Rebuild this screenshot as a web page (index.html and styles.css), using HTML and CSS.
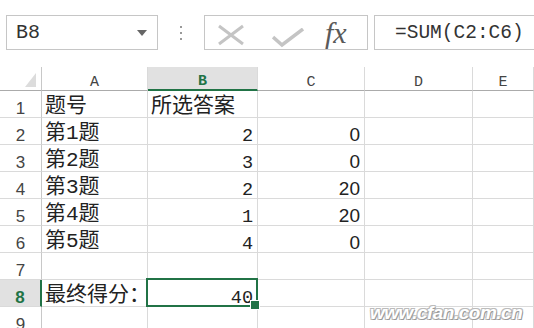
FILE: index.html
```html
<!DOCTYPE html>
<html lang="zh-CN">
<head>
  <meta charset="UTF-8" />
  <title>最终得分</title>
  <link rel="stylesheet" href="styles.css">
</head>
<body>

  <div class="toolbar">
    <div class="namebox">
      <span>B8</span>
      <svg class="arrow" width="10" height="6" viewBox="0 0 10 6"><polygon points="0,0 10,0 5,6" fill="#666"/></svg>
    </div>
    <div class="grip"><i></i><i></i><i></i></div>
    <div class="fxbox">
      <svg class="cancel" width="28" height="22" viewBox="0 0 28 22">
        <path d="M2 2 L26 20 M26 2 L2 20" stroke="#c4c4c4" stroke-width="3" fill="none"/>
      </svg>
      <svg class="enter" width="32" height="20" viewBox="0 0 32 20">
        <path d="M1 9 L10 17 L31 1" stroke="#c4c4c4" stroke-width="3.5" fill="none"/>
      </svg>
      <span class="fx">fx</span>
    </div>
    <div class="formula">=SUM(C2:C6)</div>
  </div>

  <div class="sheet">
    <div class="corner"><span class="tri"></span></div>
    <div class="colhead">A</div>
    <div class="colhead active">B</div>
    <div class="colhead">C</div>
    <div class="colhead">D</div>
    <div class="colhead">E</div>

    <div class="rowhead">1</div>
    <div class="cell">题号</div>
    <div class="cell">所选答案</div>
    <div class="cell"></div>
    <div class="cell"></div>
    <div class="cell"></div>

    <div class="rowhead">2</div>
    <div class="cell">第1题</div>
    <div class="cell num">2</div>
    <div class="cell score">0</div>
    <div class="cell"></div>
    <div class="cell"></div>

    <div class="rowhead">3</div>
    <div class="cell">第2题</div>
    <div class="cell num">3</div>
    <div class="cell score">0</div>
    <div class="cell"></div>
    <div class="cell"></div>

    <div class="rowhead">4</div>
    <div class="cell">第3题</div>
    <div class="cell num">2</div>
    <div class="cell score">20</div>
    <div class="cell"></div>
    <div class="cell"></div>

    <div class="rowhead">5</div>
    <div class="cell">第4题</div>
    <div class="cell num">1</div>
    <div class="cell score">20</div>
    <div class="cell"></div>
    <div class="cell"></div>

    <div class="rowhead">6</div>
    <div class="cell">第5题</div>
    <div class="cell num">4</div>
    <div class="cell score">0</div>
    <div class="cell"></div>
    <div class="cell"></div>

    <div class="rowhead">7</div>
    <div class="cell"></div>
    <div class="cell"></div>
    <div class="cell"></div>
    <div class="cell"></div>
    <div class="cell"></div>

    <div class="rowhead active">8</div>
    <div class="cell">最终得分：</div>
    <div class="cell num sel">40</div>
    <div class="cell"></div>
    <div class="cell"></div>
    <div class="cell"></div>

    <div class="rowhead">9</div>
    <div class="cell"></div>
    <div class="cell"></div>
    <div class="cell"></div>
    <div class="cell"></div>
    <div class="cell"></div>
  </div>

  <div class="watermark">www.cfan.com.cn</div>

</body>
</html>
```

FILE: styles.css
```css
* {
  margin: 0;
  padding: 0;
  box-sizing: border-box;
}

body {
  width: 534px;
  height: 328px;
  overflow: hidden;
  background: #fff;
  position: relative;
  color: #222;
}

/* formula bar */
.toolbar {
  display: flex;
  height: 67px;
  padding: 15px 0 0 6px;
}

.namebox {
  width: 152px;
  height: 35px;
  border: 1px solid #c6c6c6;
  display: flex;
  align-items: center;
  justify-content: space-between;
  padding: 0 10px 0 9px;
  font-family: "Liberation Mono", monospace;
  font-size: 20px;
  color: #333;
}

.arrow {
  margin-top: 1px;
}

.grip {
  width: 46px;
  height: 35px;
  display: flex;
  flex-direction: column;
  align-items: center;
  justify-content: center;
  gap: 4px;
}

.grip i {
  width: 2px;
  height: 2px;
  background: #999;
}

.fxbox {
  width: 164px;
  height: 35px;
  border: 1px solid #c6c6c6;
  display: flex;
  align-items: center;
  padding-left: 12px;
  margin-right: 6px;
}

.cancel {
  margin-top: 4px;
}

.enter {
  margin: 10px 0 0 27px;
}

.fx {
  margin-left: 21px;
  font-family: "Liberation Serif", serif;
  font-style: italic;
  font-size: 30px;
  color: #5a5a5a;
  line-height: 1;
}

.formula {
  flex: 1;
  height: 35px;
  border: 1px solid #c6c6c6;
  border-right: none;
  padding-left: 20px;
  display: flex;
  align-items: center;
  font-family: "Liberation Mono", monospace;
  font-size: 19.5px;
  color: #333;
  white-space: nowrap;
}

/* grid */
.sheet {
  display: grid;
  grid-template-columns: 42px 106px 110px 107px 108px 61px;
  grid-template-rows: 24px;
  grid-auto-rows: 27px;
}

.sheet > div {
  border-right: 1px solid #dadada;
  border-bottom: 1px solid #dadada;
}

.corner {
  position: relative;
  border-right-color: #c8c8c8 !important;
  border-bottom-color: #ababab !important;
}

.tri {
  position: absolute;
  right: 5px;
  bottom: 3px;
  width: 0;
  height: 0;
  border-left: 11px solid transparent;
  border-bottom: 14px solid #dcdcdc;
}

.colhead {
  display: flex;
  align-items: flex-end;
  justify-content: center;
  padding-bottom: 1px;
  font-family: "Liberation Mono", monospace;
  font-size: 15px;
  line-height: 12px;
  color: #444;
  border-bottom-color: #ababab !important;
}

.colhead.active {
  background: #e1e1e1;
  color: #217346;
  font-weight: bold;
  border-bottom: 2px solid #217346 !important;
}

.rowhead {
  display: flex;
  align-items: flex-end;
  justify-content: center;
  font-family: "Liberation Sans", sans-serif;
  font-size: 17px;
  line-height: 17px;
  color: #444;
  border-right-color: #c8c8c8 !important;
}

.rowhead.active {
  background: #e1e1e1;
  color: #217346;
  font-weight: bold;
  border-right: 2px solid #217346 !important;
}

.cell {
  display: flex;
  align-items: flex-end;
  padding: 0 4px 0 3px;
  font-family: "Liberation Mono", "Noto Sans CJK SC", monospace;
  font-size: 21px;
  line-height: 21px;
  color: #222;
  white-space: nowrap;
}

.num {
  justify-content: flex-end;
  font-size: 18.5px;
  line-height: 14px;
}

.score {
  justify-content: flex-end;
  font-family: "Liberation Sans", sans-serif;
  font-size: 19px;
  line-height: 18px;
  padding-right: 4px;
}

.sel {
  position: relative;
}

.sel::before {
  content: "";
  position: absolute;
  left: -2px;
  top: -2px;
  right: -1px;
  bottom: -1px;
  border: 2px solid #217346;
}

.sel::after {
  content: "";
  position: absolute;
  right: -3px;
  bottom: -4px;
  width: 8px;
  height: 8px;
  background: #217346;
  border: 1px solid #fff;
}

.watermark {
  position: absolute;
  left: 370px;
  top: 302px;
  font-family: "Liberation Sans", sans-serif;
  font-style: italic;
  font-weight: bold;
  font-size: 19px;
  letter-spacing: -0.5px;
  color: #fff;
  text-shadow: 1px 1px 0 #9a9a9a, -1px -1px 0 #bbb, 1px -1px 0 #bbb, -1px 1px 0 #bbb;
}
```
